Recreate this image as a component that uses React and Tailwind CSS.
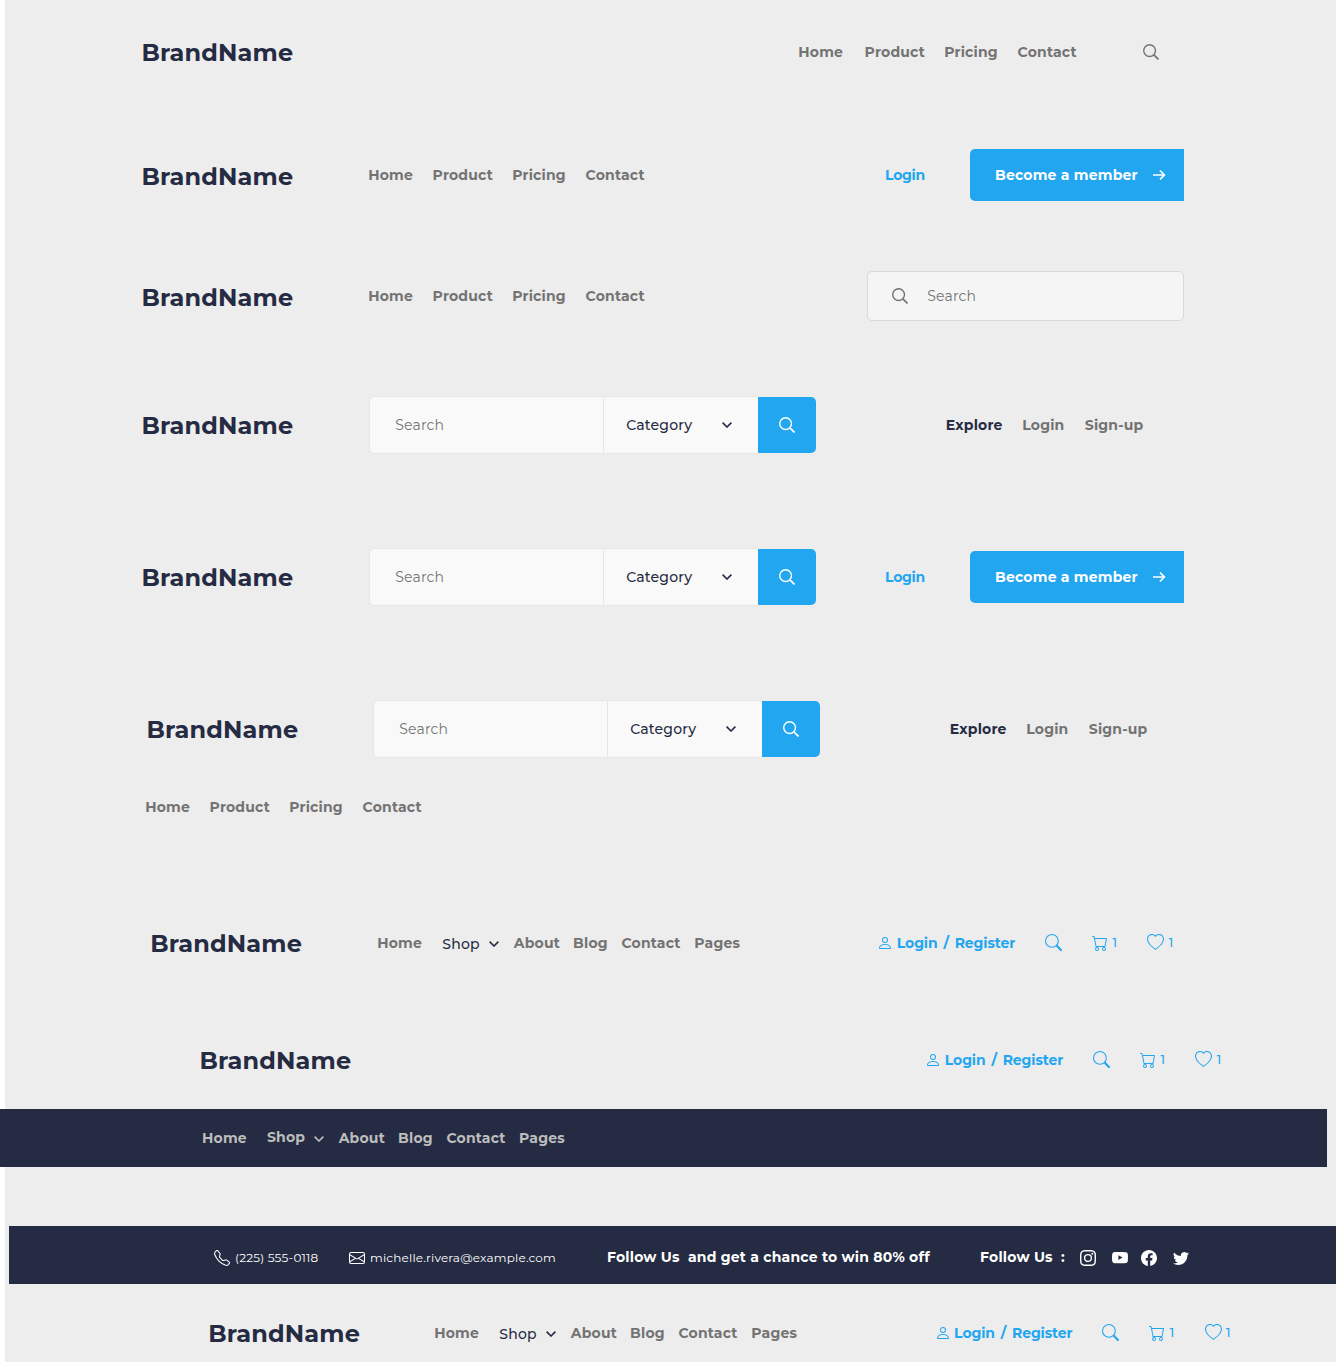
import React from "react";
import {
  BsCart,
  BsHeart,
  BsPerson,
  BsTelephone,
  BsEnvelope,
  BsInstagram,
  BsYoutube,
  BsFacebook,
  BsTwitter,
} from "react-icons/bs";

const Magnifier = ({ className = "" }) => (
  <svg viewBox="0 0 16 16" className={"size-4 shrink-0 " + className} fill="none" stroke="currentColor">
    <circle cx="6.6" cy="6.6" r="5.9" strokeWidth="1.4" />
    <path d="M10.9 10.9l4.6 4.6" strokeWidth="1.7" />
  </svg>
);

const ThinSearch = ({ className = "" }) => (
  <svg viewBox="0 0 16 16" className={"size-[17px] shrink-0 " + className} fill="currentColor" fillRule="evenodd">
    <path d="M10.442 10.442a1 1 0 011.415 0l3.85 3.85a1 1 0 01-1.414 1.415l-3.85-3.85a1 1 0 010-1.415z" />
    <path d="M6.5 12a5.5 5.5 0 100-11 5.5 5.5 0 000 11zM13 6.5a6.5 6.5 0 11-13 0 6.5 6.5 0 0113 0z" />
  </svg>
);

const Chevron = ({ className = "" }) => (
  <svg viewBox="0 0 10 6" className={"h-[6px] w-[10px] shrink-0 " + className} fill="none" stroke="currentColor" strokeWidth="1.6">
    <path d="M.6.6L5 5 9.4.6" />
  </svg>
);

const Arrow = () => (
  <svg viewBox="0 0 13 10" className="ml-[15px] h-[10px] w-[13px] shrink-0" fill="none" stroke="currentColor" strokeWidth="1.6">
    <path d="M0 5h11.4M7 .6L11.4 5 7 9.4" />
  </svg>
);

const Brand = ({ className = "pt-px" }) => (
  <div className={"w-[187px] shrink-0 pl-[0.4px] text-2xl font-bold leading-8 tracking-[0.15px] text-[#252b42] " + className}>
    BrandName
  </div>
);

const Menu = ({ className = "", first = "w-[64.4px]" }) => (
  <nav className={"flex shrink-0 font-bold text-[#737373] " + className}>
    <a className={first}>Home</a>
    <a className="w-[79.6px]">Product</a>
    <a className="w-[73.4px]">Pricing</a>
    <a>Contact</a>
  </nav>
);

const MemberActions = ({ className = "" }) => (
  <div className={"flex shrink-0 items-center font-bold " + className}>
    <a className="w-[85.5px] pl-[0.6px] tracking-[-0.3px] text-[#23a6f0]">Login</a>
    <button className="flex h-[52px] w-[214px] items-center rounded-l-[5px] bg-[#23a6f0] pl-[25px] font-bold tracking-[0.2px] text-white">
      Become a member
      <Arrow />
    </button>
  </div>
);

const CategorySearch = ({ className = "" }) => (
  <div className={"flex shrink-0 items-center " + className}>
    <div className="flex h-[58px] w-[235px] items-center rounded-l-[5px] border border-[#e6e6e6] bg-[#f9f9f9] pl-[25.2px] text-[#737373]">
      Search
    </div>
    <div className="flex h-[58px] w-[154px] items-center border-y border-[#e6e6e6] bg-[#f9f9f9] pl-[22.2px] font-medium text-[#252b42]">
      <span className="w-[95.8px]">Category</span>
      <Chevron />
    </div>
    <div className="flex h-14 w-[58px] items-center justify-center rounded-r-[5px] bg-[#23a6f0] text-white">
      <Magnifier />
    </div>
  </div>
);

const Account = ({ className = "" }) => (
  <nav className={"flex shrink-0 font-bold text-[#737373] " + className}>
    <a className="w-[76.4px] text-[#252b42]">Explore</a>
    <a className="w-[62.6px]">Login</a>
    <a>Sign-up</a>
  </nav>
);

const ShopMenu = ({ className = "" }) => (
  <nav className={"flex shrink-0 items-center font-bold text-[#737373] " + className}>
    <a className="w-[65.1px] pb-px">Home</a>
    <a className="flex w-[71.5px] items-center pt-px font-medium text-[#252b42]">
      <span className="w-[46.8px]">Shop</span>
      <Chevron />
    </a>
    <a className="w-[59.3px] pb-px">About</a>
    <a className="w-[48.4px] pb-px">Blog</a>
    <a className="w-[72.8px] pb-px">Contact</a>
    <a className="pb-px">Pages</a>
  </nav>
);

const ShopActions = ({ className = "" }) => (
  <div className={"flex shrink-0 items-center text-[#23a6f0] " + className}>
    <BsPerson className="size-4 shrink-0" />
    <a className="ml-[3.5px] w-[148.2px] font-bold tracking-[-0.1px] [word-spacing:2px]">Login / Register</a>
    <ThinSearch className="mb-px" />
    <BsCart className="ml-[29.6px] size-4 shrink-0" />
    <span className="ml-[5px] w-[34.7px] text-xs font-medium">1</span>
    <BsHeart className="mb-px size-[17px] shrink-0" />
    <span className="ml-[4.4px] text-xs font-medium">1</span>
  </div>
);

export default function App() {
  return (
    <div className="h-[1362px] w-[1336px] overflow-hidden bg-white font-['Montserrat',sans-serif] text-sm leading-6 tracking-[0.2px]">
      <div className="ml-[5px] bg-[#ededed]">
        <header className="flex h-[104px] items-center pl-[136px]">
          <Brand />
          <Menu className="ml-[470.3px] w-[344.7px]" first="w-[66.3px]" />
          <Magnifier className="text-[#737373]" />
        </header>

        <header className="flex h-[142px] items-center pl-[136px]">
          <Brand className="pt-[3px]" />
          <Menu className="ml-[40.2px] w-[516.3px]" />
          <MemberActions />
        </header>

        <header className="flex h-[100px] items-center pl-[136px]">
          <Brand className="pt-[3px]" />
          <Menu className="ml-[40.2px] w-[498.8px]" />
          <div className="flex h-[50px] w-[317px] items-center rounded-[5px] border border-[#d9d9d9] bg-[#f5f5f5] pl-6 text-[#737373]">
            <Magnifier />
            <span className="ml-[19.2px]">Search</span>
          </div>
        </header>

        <header className="flex h-[158px] items-center pl-[136px]">
          <Brand />
          <CategorySearch className="ml-[41px]" />
          <Account className="ml-[129.8px]" />
        </header>

        <header className="flex h-[146px] items-center pl-[136px]">
          <Brand />
          <CategorySearch className="ml-[41px]" />
          <MemberActions className="ml-[68.5px]" />
        </header>

        <header className="pt-[14px]">
          <div className="flex h-[130px] items-center pl-[141px]">
            <Brand />
            <CategorySearch className="ml-[40px]" />
            <Account className="ml-[129.8px]" />
          </div>
          <Menu className="h-[26px] items-center pl-[140.2px]" />
        </header>

        <header className="mt-[73px] flex h-[100px] items-center pl-[144.8px]">
          <Brand />
          <ShopMenu className="ml-[40.4px] w-[500.1px]" />
          <ShopActions />
        </header>

        <header className="pt-[18px]">
          <div className="flex h-[98px] items-center pl-[194px]">
            <Brand />
            <ShopActions className="ml-[539.3px]" />
          </div>
          <nav className="-ml-[5px] mr-[9px] flex h-[58px] items-center bg-[#252b42] pl-[202px] font-bold text-[#bdbdbd]">
            <a className="w-[64.9px]">Home</a>
            <a className="flex w-[71.8px] items-center pb-[2px]">
              <span className="w-[47.4px]">Shop</span>
              <Chevron className="mt-[3px]" />
            </a>
            <a className="w-[59.4px]">About</a>
            <a className="w-[48.4px]">Blog</a>
            <a className="w-[72.6px]">Contact</a>
            <a>Pages</a>
          </nav>
        </header>

        <header className="pt-[59px]">
          <div className="ml-[4px] flex h-[58px] items-center bg-[#252b42] pl-[205px] pt-[6px] font-bold text-white">
            <BsTelephone className="size-4 shrink-0" />
            <span className="ml-[5px] w-[114px] text-xs font-normal">(225) 555-0118</span>
            <BsEnvelope className="size-4 shrink-0" />
            <span className="ml-[5px] w-[237px] text-xs font-normal">michelle.rivera@example.com</span>
            <span className="w-[373.1px] whitespace-pre pb-[2px]">Follow Us  and get a chance to win 80% off</span>
            <span className="w-[99.9px] whitespace-pre pb-[2px]">Follow Us  :</span>
            <BsInstagram className="size-4 shrink-0" />
            <BsYoutube className="ml-4 size-4 shrink-0" />
            <BsFacebook className="ml-[13px] size-4 shrink-0" />
            <BsTwitter className="ml-4 size-4 shrink-0" />
          </div>
          <div className="flex h-[98px] items-center pl-[202.8px]">
            <Brand />
            <ShopMenu className="ml-[39.4px] w-[500.4px]" />
            <ShopActions />
          </div>
        </header>
      </div>
    </div>
  );
}
